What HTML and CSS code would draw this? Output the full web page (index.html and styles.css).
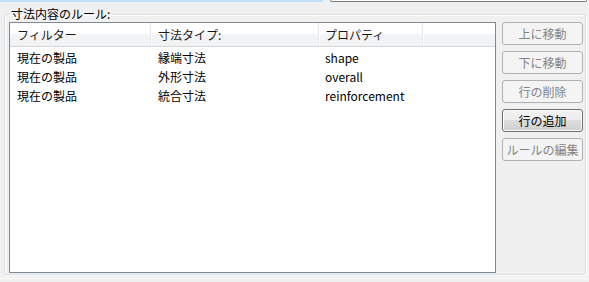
FILE: index.html
```html
<!DOCTYPE html>
<html lang="ja">
<head>
<meta charset="UTF-8">
<title>寸法内容のルール</title>
<link rel="stylesheet" href="styles.css">
</head>
<body>
<div class="top">
  <div class="top-tab"></div>
  <div class="top-field"></div>
</div>
<fieldset class="group">
  <legend>寸法内容のルール:</legend>
  <div class="content">
    <div class="list">
      <div class="head">
        <div class="hcell c1">フィルター</div>
        <div class="hcell c2">寸法タイプ:</div>
        <div class="hcell c3">プロパティ</div>
        <div class="hcell fill"></div>
      </div>
      <div class="row">
        <div class="cell c1">現在の製品</div>
        <div class="cell c2">縁端寸法</div>
        <div class="cell c3">shape</div>
      </div>
      <div class="row">
        <div class="cell c1">現在の製品</div>
        <div class="cell c2">外形寸法</div>
        <div class="cell c3">overall</div>
      </div>
      <div class="row">
        <div class="cell c1">現在の製品</div>
        <div class="cell c2">統合寸法</div>
        <div class="cell c3">reinforcement</div>
      </div>
    </div>
    <div class="buttons">
      <button class="btn" disabled>上に移動</button>
      <button class="btn" disabled>下に移動</button>
      <button class="btn" disabled>行の削除</button>
      <button class="btn on">行の追加</button>
      <button class="btn" disabled>ルールの編集</button>
    </div>
  </div>
</fieldset>
<div class="bottom"></div>
</body>
</html>
```

FILE: styles.css
```css
body { margin: 0; background: #f0f0f0; font-family: "Noto Sans CJK JP", sans-serif; font-size: 12px; color: #000;
       width: 589px; height: 282px; overflow: hidden; }
.top { display: flex; height: 6px; }
.top-tab { width: 323px; height: 2px; background: #c3dff5; }
.top-field { width: 255px; height: 1px; margin-left: 7px; border: 1px solid #7b7b7b; border-top: none;
             border-radius: 0 0 3px 3px; background: #fff; }
.group { margin: 0 3px 0 4px; padding: 0 1px 1px 4px; border: 1px solid #d5dfe5; border-radius: 3px;
         box-shadow: inset 1px 1px 0 #fff, 1px 1px 0 #fff; min-width: 0; }
.group legend { padding: 0 2px; margin-left: 0; line-height: 16px; color: #000; }
.content { display: flex; gap: 6px; }
.list { width: 485px; height: 249px; border: 1px solid #828790; background: #fff; }
.head { display: flex; height: 23px; border-bottom: 1px solid #d5d5d5;
        background: linear-gradient(#ffffff, #ffffff 45%, #f3f4f6 50%, #f1f2f4); }
.hcell { line-height: 23px; padding-left: 7px; border-right: 1px solid #e3e6ea; box-shadow: 1px 0 0 #fff; color: #1a1a1a; }
.hcell.fill { flex: 1; border-right: none; box-shadow: none; }
.c1 { width: 133px; }
.c2 { width: 160px; }
.c3 { width: 96px; padding-left: 6px; }
.head .c3 { width: 97px; }
.row { display: flex; height: 19px; line-height: 19px; }
.head + .row { margin-top: 1px; }
.cell { padding-left: 7px; white-space: nowrap; }
.row .c1 { width: 134px; }
.row .c2 { width: 161px; }
.row .c3 { padding-left: 6px; }
.buttons { display: flex; flex-direction: column; gap: 6px; }
.btn { width: 81px; height: 23px; padding: 0; font-family: inherit; font-size: 12px; border: 1px solid #adb2b5;
       border-radius: 3px; background: #f4f4f4; color: #838383; }
.btn.on { border-color: #707070; color: #000; box-shadow: inset 0 0 0 1px #fcfcfc;
          background: linear-gradient(#f2f2f2, #ebebeb 50%, #dddddd 50%, #cfcfcf); }
.bottom { height: 1px; margin-top: 3px; background: #fafafa; }
```
